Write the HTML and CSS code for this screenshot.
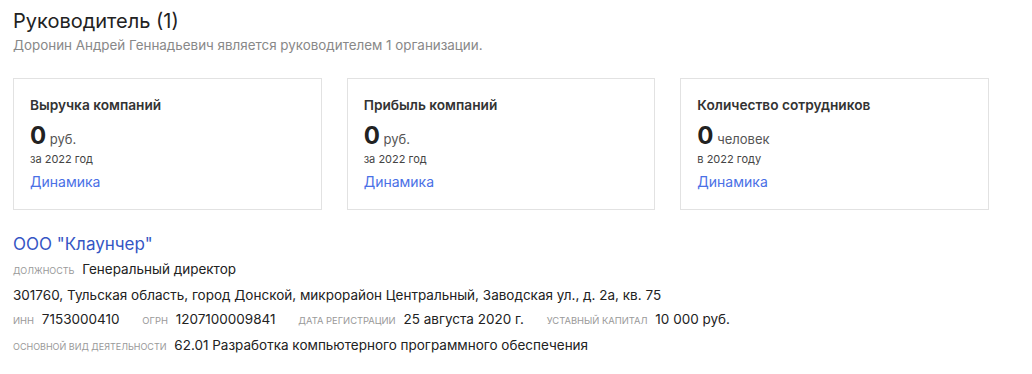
FILE: index.html
```html
<!DOCTYPE html>
<html lang="ru">
<head>
  <meta charset="UTF-8">
  <title>Руководитель</title>
  <link rel="stylesheet" href="styles.css">
</head>
<body>
  <div class="container">
    <h2 class="title">Руководитель (1)</h2>
    <p class="subtitle">Доронин Андрей Геннадьевич является руководителем 1 организации.</p>

    <div class="cards">
      <div class="card">
        <div class="card-title">Выручка компаний</div>
        <div class="card-value"><b>0</b> руб.</div>
        <div class="card-period">за 2022 год</div>
        <a class="card-link" href="#">Динамика</a>
      </div>
      <div class="card">
        <div class="card-title">Прибыль компаний</div>
        <div class="card-value"><b>0</b> руб.</div>
        <div class="card-period">за 2022 год</div>
        <a class="card-link" href="#">Динамика</a>
      </div>
      <div class="card">
        <div class="card-title">Количество сотрудников</div>
        <div class="card-value"><b>0</b> человек</div>
        <div class="card-period">в 2022 году</div>
        <a class="card-link" href="#">Динамика</a>
      </div>
    </div>

    <div class="company">
      <a class="company-name" href="#">ООО "Клаунчер"</a>
      <div class="row"><span class="label">должность</span> Генеральный директор</div>
      <div class="row">301760, Тульская область, город Донской, микрорайон Центральный, Заводская ул., д. 2а, кв. 75</div>
      <div class="row">
        <span class="item"><span class="label">инн</span> 7153000410</span>
        <span class="item"><span class="label">огрн</span> 1207100009841</span>
        <span class="item"><span class="label">дата регистрации</span> 25 августа 2020 г.</span>
        <span class="item"><span class="label">уставный капитал</span> 10 000 руб.</span>
      </div>
      <div class="row"><span class="label">основной вид деятельности</span> 62.01 Разработка компьютерного программного обеспечения</div>
    </div>
  </div>
</body>
</html>
```

FILE: styles.css
```css
body {
  font-family: Inter, "Noto Sans", sans-serif;
  background-color: #fff;
  color: #222;
  margin: 0;
  padding: 0;
}
.container {
  width: 976px;
  padding: 9px 13px;
}
.title {
  font-size: 20px;
  font-weight: normal;
  margin: 0;
  line-height: 24px;
}
.subtitle {
  font-size: 13.4px;
  color: #888;
  margin: 4px 0 0;
  line-height: 16px;
}
.cards {
  display: flex;
  gap: 25px;
  margin-top: 25px;
}
.card {
  flex: 1;
  border: 1px solid #e2e2e2;
  padding: 17px 16px 16px;
  height: 97px;
}
.card-title {
  font-size: 13.7px;
  font-weight: 600;
  color: #333;
  line-height: 18px;
}
.card-value {
  font-size: 13px;
  color: #555;
  margin-top: 9px;
  line-height: 26px;
}
.card-value b {
  font-size: 24px;
  color: #222;
}
.card-period {
  font-size: 11px;
  color: #444;
  line-height: 14px;
}
.card-link {
  display: inline-block;
  font-size: 14px;
  color: #4a70e6;
  text-decoration: none;
  margin-top: 7px;
}
.company {
  margin-top: 22px;
}
.company-name {
  font-size: 17px;
  color: #3556c4;
  text-decoration: none;
  line-height: 24px;
}
.row {
  font-size: 13.5px;
  line-height: 24px;
}
.row:nth-child(2) {
  margin-top: 1px;
}
.label {
  font-size: 9px;
  color: #999;
  text-transform: uppercase;
  margin-right: 4px;
}
.item {
  margin-right: 19px;
}
.item .label {
  font-size: 9.4px;
}
```
